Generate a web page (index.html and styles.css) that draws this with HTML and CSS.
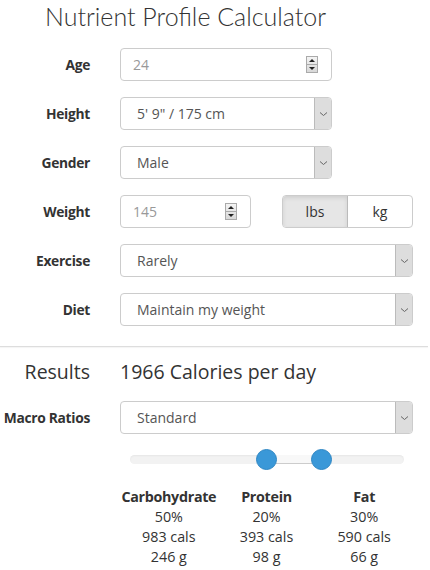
FILE: index.html
```html
<!DOCTYPE html>
<html>
<head>
<meta charset="utf-8">
<link rel="stylesheet" href="styles.css">
</head>
<body>
<div class="page">
  <h1 class="title">Nutrient Profile Calculator</h1>
  <div class="form">
    <div class="label">Age</div>
    <div class="field num"><span class="val">24</span><span class="spin"><i class="up"></i><i class="down"></i></span></div>

    <div class="label">Height</div>
    <div class="field sel"><span class="txt">5' 9" / 175 cm</span><span class="arrow"><svg width="9" height="6" viewBox="0 0 9 6"><path d="M1 1.5 L4.5 4.5 L8 1.5" fill="none" stroke="#666" stroke-width="1"/></svg></span></div>

    <div class="label">Gender</div>
    <div class="field sel"><span class="txt">Male</span><span class="arrow"><svg width="9" height="6" viewBox="0 0 9 6"><path d="M1 1.5 L4.5 4.5 L8 1.5" fill="none" stroke="#666" stroke-width="1"/></svg></span></div>

    <div class="label">Weight</div>
    <div class="weight">
      <div class="field num short"><span class="val">145</span><span class="spin"><i class="up"></i><i class="down"></i></span></div>
      <div class="toggle"><span class="opt active">lbs</span><span class="opt">kg</span></div>
    </div>

    <div class="label">Exercise</div>
    <div class="field sel wide"><span class="txt">Rarely</span><span class="arrow"><svg width="9" height="6" viewBox="0 0 9 6"><path d="M1 1.5 L4.5 4.5 L8 1.5" fill="none" stroke="#666" stroke-width="1"/></svg></span></div>

    <div class="label">Diet</div>
    <div class="field sel wide"><span class="txt">Maintain my weight</span><span class="arrow"><svg width="9" height="6" viewBox="0 0 9 6"><path d="M1 1.5 L4.5 4.5 L8 1.5" fill="none" stroke="#666" stroke-width="1"/></svg></span></div>
  </div>

  <div class="sep"></div>

  <div class="results">
    <div class="res-label">Results</div>
    <div class="res-value">1966 Calories per day</div>

    <div class="label">Macro Ratios</div>
    <div class="field sel wide"><span class="txt">Standard</span><span class="arrow"><svg width="9" height="6" viewBox="0 0 9 6"><path d="M1 1.5 L4.5 4.5 L8 1.5" fill="none" stroke="#666" stroke-width="1"/></svg></span></div>

    <div class="empty"></div>
    <div class="slider">
      <div class="track">
        <div class="range"></div>
        <span class="handle h1"></span>
        <span class="handle h2"></span>
      </div>
    </div>

    <div class="empty"></div>
    <div class="macros">
      <div class="macro"><div class="mname">Carbohydrate</div><div>50%</div><div>983 cals</div><div>246 g</div></div>
      <div class="macro"><div class="mname">Protein</div><div>20%</div><div>393 cals</div><div>98 g</div></div>
      <div class="macro"><div class="mname">Fat</div><div>30%</div><div>590 cals</div><div>66 g</div></div>
    </div>
  </div>
</div>
</body>
</html>
```
FILE: styles.css
```css
* { box-sizing: border-box; }
html, body { margin: 0; padding: 0; background: #fff; }
body {
  font-family: "Open Sans", "Liberation Sans", sans-serif;
  color: #333;
  font-size: 14px;
}
.page { width: 430px; height: 570px; overflow: hidden; }
.title {
  margin: 0;
  padding: 0 0 0 45px;
  font-family: Lato, "Open Sans", sans-serif;
  font-weight: 300;
  font-size: 25px;
  line-height: 32px;
  color: #333;
  height: 32px;
}
.form, .results {
  display: grid;
  grid-template-columns: 90px 293px;
  column-gap: 30px;
  align-items: center;
}
.form { margin-top: 16px; row-gap: 16px; }
.label {
  text-align: right;
  font-weight: 700;
  font-size: 13.8px;
  letter-spacing: -0.3px;
  color: #333;
  white-space: nowrap;
}
.field {
  height: 33px;
  border: 1px solid #ccc;
  border-radius: 4px;
  background: #fff;
  display: flex;
  align-items: center;
  width: 212px;
}
.field.wide { width: 293px; }
.field.short { width: 131px; }
.num { padding: 0 13px 0 12px; justify-content: space-between; }
.num .val { color: #999; font-size: 14px; }
.spin {
  width: 12px; height: 17px;
  border: 1px solid #aaa;
  background: linear-gradient(#f4f4f4, #d8d8d8);
  display: flex; flex-direction: column;
}
.spin i { flex: 1; display: flex; align-items: center; justify-content: center; position: relative; }
.spin i.up { border-bottom: 1px solid #aaa; }
.spin i::after { content: ""; width: 0; height: 0; border-left: 3px solid transparent; border-right: 3px solid transparent; }
.spin i.up::after { border-bottom: 3px solid #222; }
.spin i.down::after { border-top: 3px solid #222; }
.sel { justify-content: space-between; overflow: hidden; }
.sel .txt { padding-left: 16px; color: #555; font-size: 14px; }
.arrow {
  width: 17px; height: 100%;
  background: #ddd;
  border-left: 1px solid #bbb;
  display: flex; align-items: center; justify-content: center;
}
.weight { display: flex; justify-content: space-between; align-items: center; }
.toggle {
  display: flex; width: 131px; height: 33px;
  border: 1px solid #ccc; border-radius: 4px; overflow: hidden;
}
.opt { flex: 1; display: flex; align-items: center; justify-content: center; color: #333; font-size: 14px; }
.opt.active { background: #e6e6e6; border-right: 1px solid #bbb; box-shadow: inset 0 2px 4px rgba(0,0,0,0.1); }
.sep { height: 1px; background: #ddd; margin: 20px 2px 0 0; box-shadow: 0 1px 1px rgba(0,0,0,0.05); }
.results { margin-top: 13px; }
.res-label { text-align: right; font-size: 19.5px; color: #333; line-height: 24px; }
.res-value { font-size: 19.5px; color: #333; line-height: 24px; }
.results .label { margin-top: 17px; }
.results .field { margin-top: 17px; }
.slider { padding: 21px 9px 0 10px; }
.track {
  position: relative;
  height: 9px;
  background: #f2f2f2;
  border-radius: 5px;
  box-shadow: inset 0 1px 2px rgba(0,0,0,0.05);
}
.range {
  position: absolute; left: 137px; width: 55px; top: 0; bottom: 0;
  background: #f8f8f8; border-bottom: 1px solid #ccc;
}
.handle {
  position: absolute; top: -6px;
  width: 21px; height: 21px; border-radius: 50%;
  background: #3a98d8;
  border: 1px solid #2f87c4;
}
.h1 { left: 126px; }
.h2 { left: 181px; }
.macros {
  display: grid; grid-template-columns: repeat(3, 1fr);
  margin-top: 23px;
  text-align: center;
  font-size: 14.3px; line-height: 20px; color: #333;
}
.mname { font-weight: 700; letter-spacing: -0.3px; }
```
